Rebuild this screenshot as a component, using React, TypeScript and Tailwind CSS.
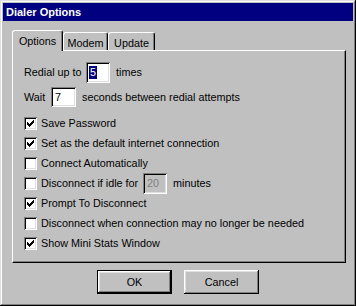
import React from "react";

const sunken =
  "shadow-[inset_1px_1px_#808080,inset_-1px_-1px_#ffffff,inset_2px_2px_#000000,inset_-2px_-2px_#dfdfdf]";
const raised =
  "shadow-[inset_-1px_-1px_#000000,inset_1px_1px_#ffffff,inset_-2px_-2px_#808080,inset_2px_2px_#dfdfdf]";

function Check({ checked }: { checked: boolean }) {
  return (
    <span className={`relative w-[13px] h-[13px] shrink-0 bg-white ${sunken}`}>
      {checked && (
        <svg
          width="13"
          height="13"
          viewBox="0 0 13 13"
          shapeRendering="crispEdges"
          className="absolute left-0 top-0"
        >
          <rect x="3" y="5" width="1" height="3" fill="#000" />
          <rect x="4" y="6" width="1" height="3" fill="#000" />
          <rect x="5" y="7" width="1" height="3" fill="#000" />
          <rect x="6" y="6" width="1" height="3" fill="#000" />
          <rect x="7" y="5" width="1" height="3" fill="#000" />
          <rect x="8" y="4" width="1" height="3" fill="#000" />
          <rect x="9" y="3" width="1" height="3" fill="#000" />
        </svg>
      )}
    </span>
  );
}

function CheckRow({ checked, children }: { checked: boolean; children: React.ReactNode }) {
  return (
    <div className="flex items-center h-[20px]">
      <Check checked={checked} />
      <span className="ml-[4px] whitespace-nowrap">{children}</span>
    </div>
  );
}

export default function App() {
  return (
    <div
      className={`w-[356px] h-[306px] bg-[#c0c0c0] p-[3px] flex flex-col text-[10.8px] leading-none text-black font-['Liberation_Sans',Arial,sans-serif] shadow-[inset_-1px_-1px_#000000,inset_1px_1px_#dfdfdf,inset_-2px_-2px_#808080,inset_2px_2px_#ffffff]`}
    >
      {/* title bar */}
      <div className="h-[18px] bg-[#000080] flex items-center pl-[3px]">
        <span className="text-white font-bold text-[11px]">Dialer Options</span>
      </div>

      {/* tabs */}
      <div className="relative z-10 flex items-start h-[20px] ml-[9px] mt-[9px]">
        <div className="w-[51px] h-[21px] bg-[#c0c0c0] border-l border-t border-white border-r border-r-black rounded-t-[3px] shadow-[inset_-1px_0_#808080] flex justify-center pt-[5px]">
          Options
        </div>
        <div className="w-[45px] h-[18px] mt-[2px] border-l border-t border-white border-r border-r-black rounded-t-[3px] shadow-[inset_-1px_0_#808080] flex justify-center pt-[5px]">
          Modem
        </div>
        <div className="w-[47px] h-[18px] mt-[2px] border-l border-t border-white border-r border-r-black rounded-t-[3px] shadow-[inset_-1px_0_#808080] flex justify-center pt-[5px]">
          Update
        </div>
      </div>

      {/* panel */}
      <div className="w-[334px] h-[213px] ml-[9px] border-t border-l border-white border-r border-b border-r-black border-b-black shadow-[inset_-1px_-1px_#808080] flex flex-col pt-[11px] pl-[11px]">
        <div className="flex items-center h-[21px]">
          <span className="w-[62px] whitespace-nowrap">Redial up to</span>
          <div className={`w-[24px] h-[21px] bg-white ${sunken} flex items-center pl-[3px]`}>
            <span className="bg-[#000080] text-white px-[1px] py-[1px]">5</span>
          </div>
          <span className="ml-[6px]">times</span>
        </div>
        <div className="flex items-center h-[20px] mt-[4px]">
          <span className="w-[27px]">Wait</span>
          <div className={`w-[25px] h-[20px] bg-white ${sunken} flex items-center pl-[4px]`}>
            7
          </div>
          <span className="ml-[6px] whitespace-nowrap">seconds between redial attempts</span>
        </div>

        <div className="flex flex-col mt-[6px]">
          <CheckRow checked>Save Password</CheckRow>
          <CheckRow checked>Set as the default internet connection</CheckRow>
          <CheckRow checked={false}>Connect Automatically</CheckRow>
          <div className="flex items-center h-[20px]">
            <Check checked={false} />
            <span className="ml-[4px] w-[102px] whitespace-nowrap">Disconnect if idle for</span>
            <div className={`w-[24px] h-[21px] bg-[#c0c0c0] text-[#808080] ${sunken} flex items-center pl-[4px]`}>
              20
            </div>
            <span className="ml-[6px]">minutes</span>
          </div>
          <CheckRow checked>Prompt To Disconnect</CheckRow>
          <CheckRow checked={false}>Disconnect when connection may no longer be needed</CheckRow>
          <CheckRow checked>Show Mini Stats Window</CheckRow>
        </div>
      </div>

      {/* buttons */}
      <div className="flex justify-center gap-[12px] mt-[7px]">
        <button className="w-[75px] h-[24px] border border-black bg-[#c0c0c0] p-0">
          <div className={`w-full h-full flex items-center justify-center ${raised}`}>OK</div>
        </button>
        <button className={`w-[75px] h-[24px] bg-[#c0c0c0] flex items-center justify-center ${raised}`}>
          Cancel
        </button>
      </div>
    </div>
  );
}
